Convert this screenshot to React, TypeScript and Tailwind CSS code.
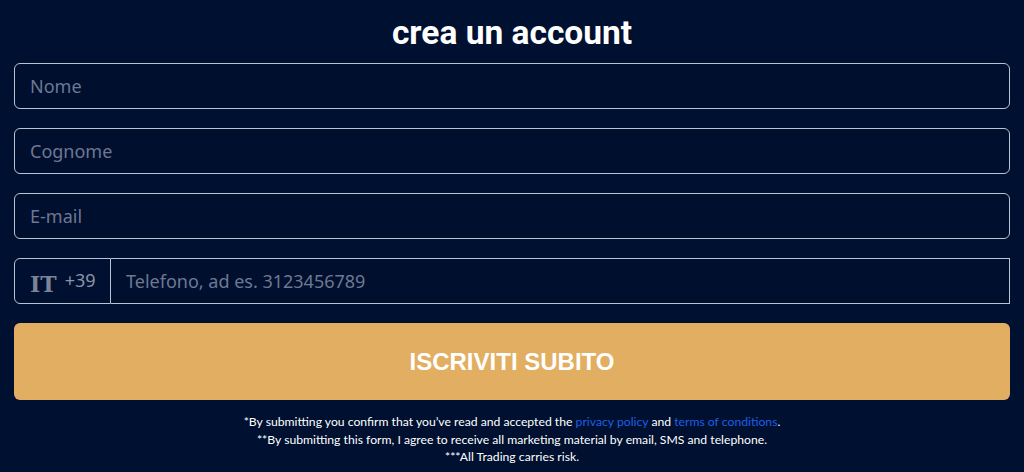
import React from 'react';

const fields = ['Nome', 'Cognome', 'E-mail'];

export default function App() {
  return (
    <div className="min-h-[472px] bg-[#001030] px-[14px] pt-[14px] font-['Noto_Sans',sans-serif]">
      <h1 className="text-center text-[33.5px] leading-[38px] font-bold text-white font-['Roboto',sans-serif] mb-[11px]">
        crea un account
      </h1>
      <form className="flex flex-col gap-[19px]" onSubmit={e => e.preventDefault()}>
        {fields.map(f => (
          <input
            key={f}
            type="text"
            placeholder={f}
            className="h-[46px] w-full rounded-md border border-[#b9c3d6] bg-[#000f2d] pl-[15px] text-[18px] text-white placeholder:text-[#6e7893] outline-none"
          />
        ))}
        <div className="flex h-[46px] w-full">
          <div className="flex w-[97px] shrink-0 items-center gap-[8px] rounded-l-md border border-[#b9c3d6] pl-[15px]">
            <span className="text-[22px] font-bold text-[#7d8497] font-['DejaVu_Serif',serif] leading-none mt-[6px]">IT</span>
            <span className="text-[18px] leading-none text-[#8a93a8] -mt-[2px]">+39</span>
          </div>
          <input
            type="tel"
            placeholder="Telefono, ad es. 3123456789"
            className="h-full flex-1 border border-l-0 border-[#b9c3d6] bg-[#000f2d] pl-[15px] text-[18px] text-white placeholder:text-[#6e7893] outline-none"
          />
        </div>
        <button
          type="submit"
          className="h-[77px] w-full rounded-md bg-[#e2ae62] text-[24px] font-bold text-white font-['Liberation_Sans',sans-serif]"
        >
          ISCRIVITI SUBITO
        </button>
      </form>
      <div className="mt-[13px] text-center text-[12.2px] leading-[17.5px] text-white font-['Lato',sans-serif]">
        <p>
          *By submitting you confirm that you’ve read and accepted the{' '}
          <a className="text-[#1f5fe6]">privacy policy</a> and{' '}
          <a className="text-[#1f5fe6]">terms of conditions</a>.
        </p>
        <p>**By submitting this form, I agree to receive all marketing material by email, SMS and telephone.</p>
        <p>***All Trading carries risk.</p>
      </div>
    </div>
  );
}
